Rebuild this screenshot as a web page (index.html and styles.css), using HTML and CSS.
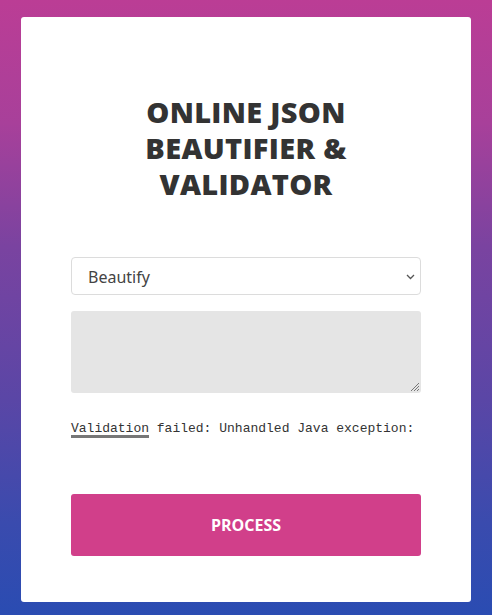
FILE: index.html
```html
<!DOCTYPE html>
<html>
<head>
<meta charset="utf-8">
<link rel="stylesheet" href="styles.css">
</head>
<body>
<div class="card">
  <h1 class="title">ONLINE JSON<br>BEAUTIFIER &amp;<br>VALIDATOR</h1>
  <div class="select">
    <span class="select-text">Beautify</span>
    <svg class="chev" width="9" height="6" viewBox="0 0 9 6"><path d="M1 1 L4.5 4.5 L8 1" fill="none" stroke="#555" stroke-width="1.3"/></svg>
  </div>
  <div class="textarea">
    <svg class="grip" width="10" height="10" viewBox="0 0 10 10"><path d="M9 1 L1 9 M9 4 L4 9 M9 7 L7 9" stroke="#777" stroke-width="1"/></svg>
  </div>
  <p class="msg"><span class="ul">Validation</span> failed: Unhandled Java exception:</p>
  <div class="btn">PROCESS</div>
</div>
</body>
</html>
```
FILE: styles.css
```css
html, body { margin: 0; height: 100%; }
body {
  background: linear-gradient(to bottom, #bb3d95 0%, #a8409a 20%, #7a43a0 40%, #5a46a6 65%, #3a4bae 85%, #2a4cb2 100%);
  padding: 17px 21px 13px;
  box-sizing: border-box;
  height: 615px;
  overflow: hidden;
}
.card {
  background: #fff;
  border-radius: 3px;
  height: 585px;
  box-sizing: border-box;
  padding: 0 50px;
  display: flex;
  flex-direction: column;
}
.title {
  margin: 77px 0 0;
  font-family: "Open Sans", sans-serif;
  font-weight: 800;
  font-size: 29px;
  line-height: 36px;
  color: #333;
  text-align: center;
  letter-spacing: 0.3px;
}
.select {
  margin-top: 55px;
  height: 38px;
  box-sizing: border-box;
  border: 1px solid #dcdcdc;
  border-radius: 4px;
  display: flex;
  align-items: center;
  justify-content: space-between;
  padding: 2px 5px 0 16px;
}
.select-text {
  font-family: "Noto Sans", sans-serif;
  font-size: 16px;
  color: #444;
}
.textarea {
  margin-top: 16px;
  height: 82px;
  background: #e5e5e5;
  border-radius: 3px;
  position: relative;
}
.grip { position: absolute; right: 1px; bottom: 1px; }
.msg {
  margin: 27px 0 0;
  font-family: "Liberation Mono", monospace;
  font-size: 13px;
  line-height: 17px;
  color: #333;
}
.ul {
  text-decoration: underline;
  text-decoration-color: #777;
  text-decoration-thickness: 3px;
  text-underline-offset: 3px;
  padding-right: 2px;
  margin-right: -2px;
}
.btn {
  margin-top: 57px;
  height: 62px;
  background: #d13f8a;
  border-radius: 3px;
  color: #fff;
  font-family: "Open Sans", sans-serif;
  font-weight: 700;
  font-size: 16px;
  display: flex;
  align-items: center;
  justify-content: center;
}
```
